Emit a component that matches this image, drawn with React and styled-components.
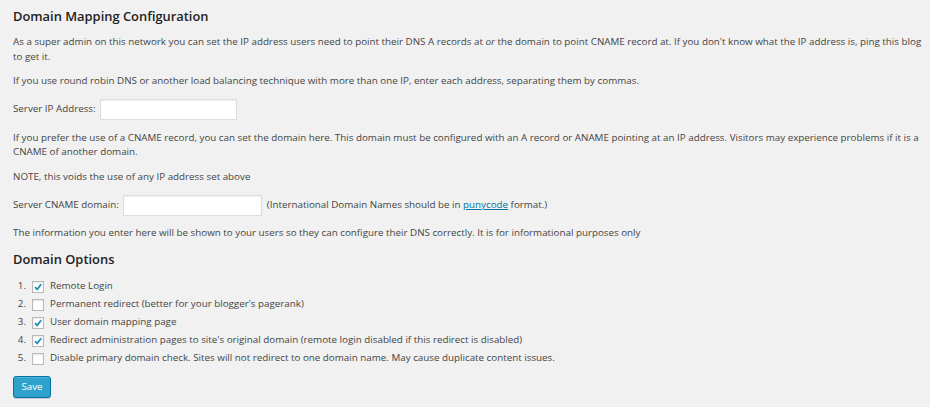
import React from "react";
import styled, { createGlobalStyle } from "styled-components";

const GlobalStyle = createGlobalStyle`
  html, body {
    margin: 0;
    padding: 0;
    background: #f1f1f1;
  }
  body {
    font-family: "Open Sans", "Liberation Sans", sans-serif;
    color: #444;
  }
`;

const Wrap = styled.div`
  padding: 8px 2px 10px 13px;
  font-size: 9.8px;
  line-height: 14.7px;
`;

const Heading = styled.h3`
  margin: 0 0 11px;
  font-size: 12.9px;
  font-weight: 600;
  color: #222;
  line-height: 16px;
`;

const Para = styled.p`
  margin: 9.6px 0;

  em {
    font-style: italic;
  }
`;

const FieldRow = styled.div`
  display: flex;
  align-items: center;
  gap: 4px;
  margin: 10.5px 0;
`;

const TextInput = styled.input`
  box-sizing: border-box;
  width: ${p => p.$w}px;
  height: 21px;
  margin: 0;
  border: 1px solid #ddd;
  background: #fff;
  box-shadow: inset 0 1px 2px rgba(0, 0, 0, 0.07);
  outline: none;
`;

const Note = styled.span`
  margin-left: 1px;
`;

const Link = styled.a`
  color: #0074a2;
  text-decoration: underline;
`;

const OptionList = styled.ol`
  margin: 0;
  padding: 0;
  list-style: none;
`;

const Option = styled.li`
  display: flex;
  align-items: center;
  height: 18px;
`;

const Num = styled.span`
  width: 13px;
  text-align: right;
  margin-right: 6px;
`;

const Box = styled.span`
  box-sizing: border-box;
  width: 12px;
  height: 12px;
  border: 1px solid #b4b9be;
  background: #fff;
  box-shadow: inset 0 1px 2px rgba(0, 0, 0, 0.1);
  margin-right: 6px;
  display: flex;
  align-items: center;
  justify-content: center;
`;

const SaveButton = styled.button`
  margin-top: 8px;
  box-sizing: border-box;
  width: 38px;
  height: 22px;
  padding: 0;
  font-family: inherit;
  font-size: 9.8px;
  color: #fff;
  background: #2ea2cc;
  border: 1px solid #0074a2;
  border-radius: 3px;
  box-shadow: inset 0 1px 0 rgba(120, 200, 230, 0.5), 0 1px 0 rgba(0, 0, 0, 0.15);
`;

const Check = () => (
  <svg width="10" height="10" viewBox="0 0 10 10">
    <path d="M2 5.2 L4.2 7.4 L8.2 2.2" fill="none" stroke="#1e8cbe" strokeWidth="1.8" />
  </svg>
);

const options = [
  { label: "Remote Login", on: true },
  { label: "Permanent redirect (better for your blogger's pagerank)", on: false },
  { label: "User domain mapping page", on: true },
  { label: "Redirect administration pages to site's original domain (remote login disabled if this redirect is disabled)", on: true },
  { label: "Disable primary domain check. Sites will not redirect to one domain name. May cause duplicate content issues.", on: false }
];

export default function App() {
  return (
    <>
      <GlobalStyle />
      <Wrap>
        <Heading>Domain Mapping Configuration</Heading>
        <Para>
          As a super admin on this network you can set the IP address users need to point their DNS A records at <em>or</em> the
          domain to point CNAME record at. If you don't know what the IP address is, ping this blog to get it.
        </Para>
        <Para>
          If you use round robin DNS or another load balancing technique with more than one IP, enter each address, separating
          them by commas.
        </Para>
        <FieldRow>
          Server IP Address: <TextInput $w={137} />
        </FieldRow>
        <Para>
          If you prefer the use of a CNAME record, you can set the domain here. This domain must be configured with an A record
          or ANAME pointing at an IP address. Visitors may experience problems if it is a CNAME of another domain.
        </Para>
        <Para>NOTE, this voids the use of any IP address set above</Para>
        <FieldRow>
          Server CNAME domain: <TextInput $w={139} />
          <Note>
            (International Domain Names should be in <Link href="#">punycode</Link> format.)
          </Note>
        </FieldRow>
        <Para>
          The information you enter here will be shown to your users so they can configure their DNS correctly. It is for
          informational purposes only
        </Para>
        <Heading>Domain Options</Heading>
        <OptionList>
          {options.map((o, i) => (
            <Option key={i}>
              <Num>{i + 1}.</Num>
              <Box>{o.on && <Check />}</Box>
              {o.label}
            </Option>
          ))}
        </OptionList>
        <SaveButton>Save</SaveButton>
      </Wrap>
    </>
  );
}
